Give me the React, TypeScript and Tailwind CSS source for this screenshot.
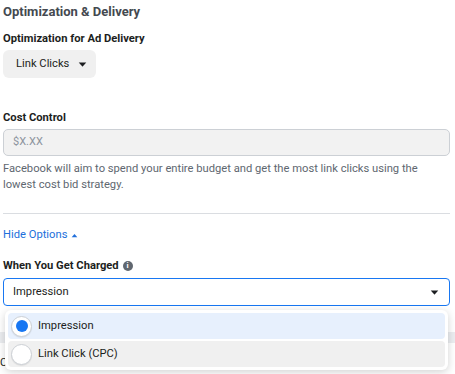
const font = { fontFamily: "Roboto, 'Liberation Sans', sans-serif" };

function Caret({ up = false, className = "" }: { up?: boolean; className?: string }) {
  return (
    <svg width="9" height="5" viewBox="0 0 10 6" className={className}>
      {up ? (
        <path d="M1 5.5 L5 1 L9 5.5 Z" fill="currentColor" />
      ) : (
        <path d="M0.5 0.5 L9.5 0.5 L5.5 5.2 Q5 5.7 4.5 5.2 Z" fill="currentColor" />
      )}
    </svg>
  );
}

function Radio({ checked }: { checked: boolean }) {
  return (
    <span className="flex h-[21px] w-[21px] shrink-0 items-center justify-center rounded-full border border-[#ccd0d5] bg-white shadow-[0_1px_1px_rgba(0,0,0,0.08)]">
      {checked && <span className="h-[12px] w-[12px] rounded-full bg-[#1877f2]" />}
    </span>
  );
}

export default function App() {
  return (
    <div
      style={font}
      className="relative h-[374px] w-[455px] overflow-hidden bg-white pl-[3px] pr-[5px] text-[#1c1e21]"
    >
      <div className="pt-[2px] text-[13px] font-bold leading-[20px] text-[#444950]">
        Optimization &amp; Delivery
      </div>

      <div className="mt-[9px] text-[11.2px] font-bold leading-[16px] text-[#1c1e21]">
        Optimization for Ad Delivery
      </div>
      <button className="mt-[3px] flex h-[28px] w-[93px] items-center gap-[9px] whitespace-nowrap rounded-[6px] bg-[#f0f0f0] pl-[13px] text-[11.2px] text-[#1c1e21]">
        Link Clicks
        <Caret className="text-[#1c1e21]" />
      </button>

      <div className="mt-[32px] text-[11.2px] font-bold leading-[16px]">Cost Control</div>
      <div className="mt-[3px] flex h-[27px] items-center rounded-[5px] border border-[#ccd0d5] bg-[#f2f2f2] pl-[9px] text-[11px] text-[#8d949e]">
        $X.XX
      </div>
      <p className="mt-[5px] text-[11.2px] leading-[16px] text-[#606770]">
        Facebook will aim to spend your entire budget and get the most link clicks using the
        lowest cost bid strategy.
      </p>

      <div className="mt-[20px] h-px bg-[#dadde1]" />

      <div className="mt-[13px] flex items-center gap-[4px] text-[11.2px] leading-[16px] text-[#216fdb]">
        Hide Options
        <Caret up className="h-[5px] w-[7px] text-[#216fdb]" />
      </div>

      <div className="mt-[15px] flex items-center gap-[4px] text-[11.2px] font-bold leading-[16px]">
        When You Get Charged
        <span className="flex h-[10px] w-[10px] items-center justify-center rounded-full bg-[#606770] text-[8px] font-bold leading-none text-white">
          i
        </span>
      </div>
      <div className="mt-[4px] flex h-[28px] items-center justify-between rounded-[4px] border border-[#1877f2] bg-white pl-[9px] pr-[10px] text-[11.2px]">
        Impression
        <Caret className="text-[#1c1e21]" />
      </div>

      {/* page content underneath the open menu */}
      <div className="mt-[26px] -ml-[3px] -mr-[5px] h-[11px] bg-[#ebedf0]" />
      <div className="mt-[12px] -ml-[3px] text-[11px] leading-[16px] text-[#1c1e21]">Conversion</div>

      <div className="absolute left-[5px] top-[310px] w-[443px] rounded-[6px] bg-white p-[3px] shadow-[0_2px_8px_rgba(0,0,0,0.18)]">
        <div className="flex h-[26px] items-center gap-[6px] rounded-[4px] bg-[#e7f0fd] pl-[3px] text-[11.2px]">
          <Radio checked />
          Impression
        </div>
        <div className="mt-[2px] flex h-[26px] items-center gap-[6px] rounded-[4px] bg-[#f0f0f0] pl-[3px] text-[11.2px]">
          <Radio checked={false} />
          Link Click (CPC)
        </div>
      </div>
    </div>
  );
}
